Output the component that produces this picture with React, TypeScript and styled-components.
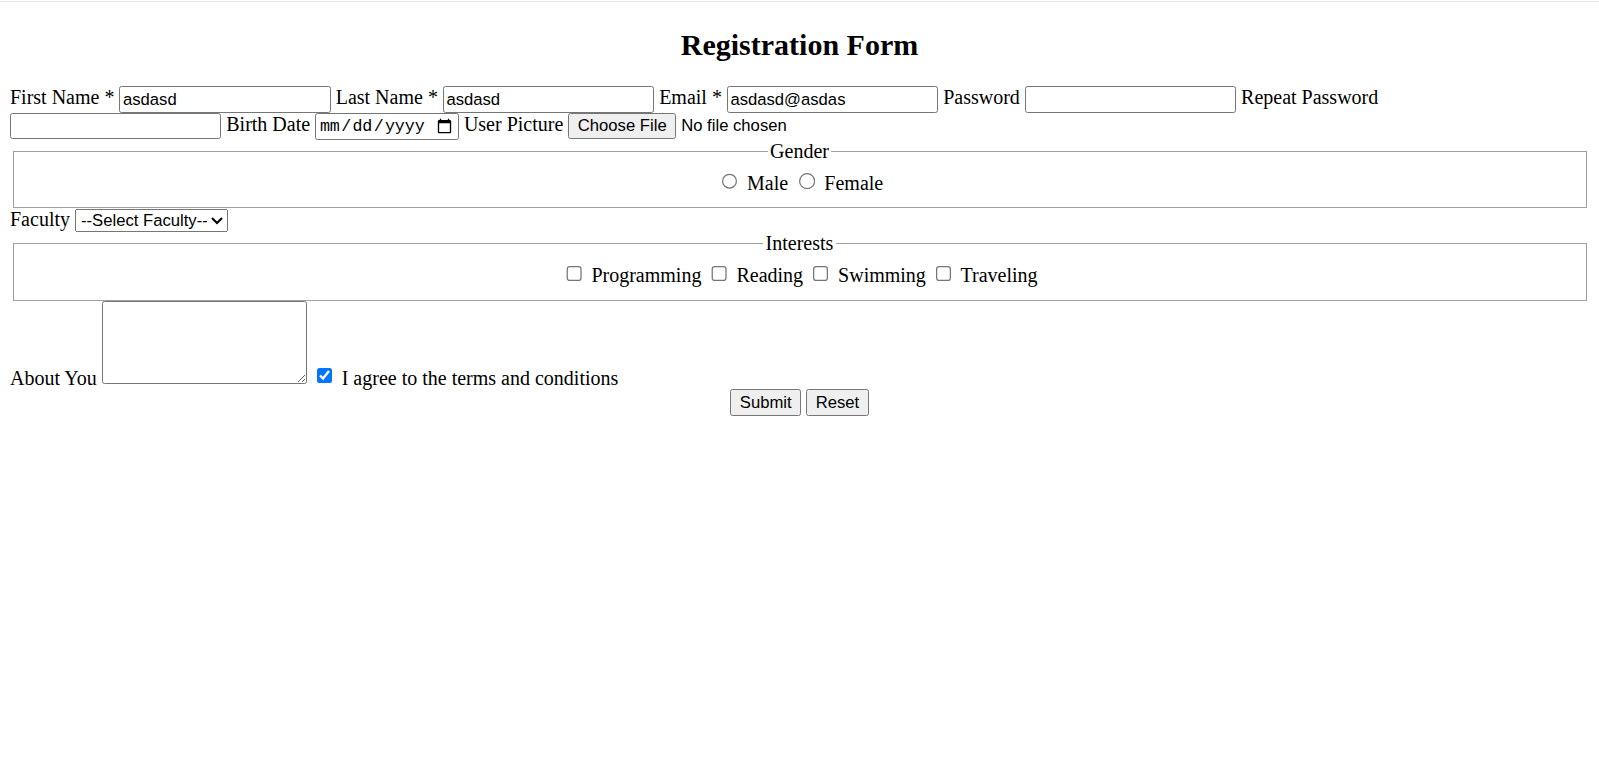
import React from "react";
import styled, { createGlobalStyle } from "styled-components";

const GlobalStyle = createGlobalStyle`
  html {
    zoom: 1.25;
    background:
      linear-gradient(
        to bottom,
        #ffffff 0,
        #ffffff 0.8px,
        #e6e4ef 0.8px,
        #e6e4ef 1.6px,
        #ffffff 1.6px
      ) no-repeat top left / 100% 2px,
      #ffffff;
  }
  body {
    margin: 8px;
    font-family: "Liberation Serif", "Times New Roman", serif;
    font-size: 16px;
    color: #000;
  }
`;

const controlFont = `
  font-family: "Liberation Sans", Arial, sans-serif;
  font-size: 13.333px;
`;

const Title = styled.h2`
  text-align: center;
  font-size: 1.5em;
  font-weight: bold;
  margin: 14px 0 0.83em;
`;

const Form = styled.form`
  display: block;
`;

const FieldLabel = styled.label`
  display: inline;
`;

const TextInput = styled.input`
  ${controlFont}
  box-sizing: border-box;
  width: 169px;
  height: 21px;
  padding: 1px 2px;
  border: 1px solid #767676;
  border-radius: 2px;
  color: #000;
  vertical-align: baseline;
`;

const DateInput = styled.input`
  font-family: "Liberation Mono", "Courier New", monospace;
  font-size: 13.333px;
  box-sizing: border-box;
  width: 115px;
  height: 21px;
  padding: 1px 2px;
  border: 1px solid #767676;
  border-radius: 2px;
`;

const FileInput = styled.input`
  ${controlFont}
`;

const Group = styled.fieldset`
  text-align: center;
  margin: 0 2px;
  padding: 0.35em 0.75em 0.625em;
  border: 1px solid #a0a0a0;
`;

const GroupTitle = styled.legend`
  margin-inline: auto;
  padding: 0 2px;
`;

const Choice = styled.input`
  vertical-align: baseline;
`;

const Select = styled.select`
  ${controlFont}
  box-sizing: border-box;
  width: 122px;
  color: #000;
`;

const TextArea = styled.textarea`
  font-family: "Liberation Mono", "Courier New", monospace;
  font-size: 13.333px;
  box-sizing: border-box;
  width: 164px;
  height: 67px;
  border: 1px solid #767676;
  border-radius: 2px;
  padding: 2px;
`;

const Actions = styled.div`
  text-align: center;
`;

const Button = styled.button`
  ${controlFont}
  color: #000;
`;

export default function App() {
  return (
    <>
      <GlobalStyle />
      <Title>Registration Form</Title>
      <Form onSubmit={(e) => e.preventDefault()}>
        <FieldLabel htmlFor="fname">First Name *</FieldLabel>{" "}
        <TextInput id="fname" type="text" defaultValue="asdasd" />{" "}
        <FieldLabel htmlFor="lname">Last Name *</FieldLabel>{" "}
        <TextInput id="lname" type="text" defaultValue="asdasd" />{" "}
        <FieldLabel htmlFor="email">Email *</FieldLabel>{" "}
        <TextInput id="email" type="email" defaultValue="asdasd@asdas" />{" "}
        <FieldLabel htmlFor="pass">Password</FieldLabel>{" "}
        <TextInput id="pass" type="password" />{" "}
        <FieldLabel htmlFor="rpass">Repeat Password</FieldLabel>{" "}
        <TextInput id="rpass" type="password" />{" "}
        <FieldLabel htmlFor="bdate">Birth Date</FieldLabel>{" "}
        <DateInput id="bdate" type="date" />{" "}
        <FieldLabel htmlFor="pic">User Picture</FieldLabel>{" "}
        <FileInput id="pic" type="file" />
        <Group>
          <GroupTitle>Gender</GroupTitle>
          <Choice id="male" type="radio" name="gender" />{" "}
          <FieldLabel htmlFor="male">Male</FieldLabel>{" "}
          <Choice id="female" type="radio" name="gender" />{" "}
          <FieldLabel htmlFor="female">Female</FieldLabel>
        </Group>
        <FieldLabel htmlFor="faculty">Faculty</FieldLabel>{" "}
        <Select id="faculty" defaultValue="">
          <option value="">--Select Faculty--</option>
          <option value="eng">Engineering</option>
          <option value="cs">Computer Science</option>
        </Select>
        <Group>
          <GroupTitle>Interests</GroupTitle>
          <Choice id="prog" type="checkbox" />{" "}
          <FieldLabel htmlFor="prog">Programming</FieldLabel>{" "}
          <Choice id="read" type="checkbox" />{" "}
          <FieldLabel htmlFor="read">Reading</FieldLabel>{" "}
          <Choice id="swim" type="checkbox" />{" "}
          <FieldLabel htmlFor="swim">Swimming</FieldLabel>{" "}
          <Choice id="travel" type="checkbox" />{" "}
          <FieldLabel htmlFor="travel">Traveling</FieldLabel>
        </Group>
        <FieldLabel htmlFor="about">About You</FieldLabel>{" "}
        <TextArea id="about" />{" "}
        <Choice id="agree" type="checkbox" defaultChecked />{" "}
        <FieldLabel htmlFor="agree">I agree to the terms and conditions</FieldLabel>
        <Actions>
          <Button type="submit">Submit</Button>{" "}
          <Button type="reset">Reset</Button>
        </Actions>
      </Form>
    </>
  );
}
